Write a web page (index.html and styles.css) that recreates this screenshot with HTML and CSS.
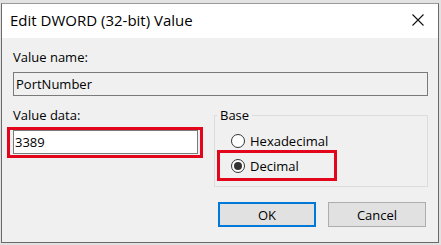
FILE: index.html
```html
<!DOCTYPE html>
<html>
<head>
<meta charset="utf-8">
<link rel="stylesheet" href="styles.css">
</head>
<body>
<div class="window">
  <div class="titlebar">
    <span class="title">Edit DWORD (32-bit) Value</span>
    <svg class="close" width="12" height="12" viewBox="0 0 12 12"><path d="M0.5 0.5L11.5 11.5M11.5 0.5L0.5 11.5" stroke="#111" stroke-width="1.1" fill="none"/></svg>
  </div>
  <div class="content">
    <div class="label">Value name:</div>
    <div class="field readonly">PortNumber</div>
    <div class="row">
      <div class="left">
        <div class="label">Value data:</div>
        <div class="mark data-mark"><div class="field input">3389</div></div>
      </div>
      <fieldset class="group">
        <legend>Base</legend>
        <div class="radio-row hex"><span class="radio"></span><span class="radio-text">Hexadecimal</span></div>
        <div class="mark dec-mark"><div class="radio-row dec"><span class="radio checked"></span><span class="radio-text">Decimal</span></div></div>
      </fieldset>
    </div>
    <div class="buttons">
      <div class="btn default">OK</div>
      <div class="btn">Cancel</div>
    </div>
  </div>
</div>
</body>
</html>
```
FILE: styles.css
```css
html, body {
  margin: 0;
}
body {
  background: #e2e2e2;
  padding: 3px 0 0 1px;
  width: 441px;
  height: 245px;
  box-sizing: border-box;
  overflow: hidden;
  font-family: "Open Sans", "Noto Sans", sans-serif;
  color: #000;
}
.window {
  width: 438px;
  height: 240px;
  box-sizing: border-box;
  border: 1px solid #6a6a6a;
  border-top-color: #9a9a9a;
  background: #f0f0f0;
  display: flex;
  flex-direction: column;
}
.titlebar {
  height: 34px;
  flex: none;
  background: #fff;
  display: flex;
  align-items: center;
  justify-content: space-between;
  padding: 0 14px 3px 8px;
  box-sizing: border-box;
}
.title {
  font-size: 15px;
  line-height: 18px;
}
.close {
  display: block;
}
.content {
  flex: 1;
  padding: 11px 10px 0 11px;
}
.label {
  font-size: 13px;
  line-height: 16px;
}
.field {
  height: 24px;
  box-sizing: border-box;
  border: 1px solid #7a7a7a;
  font-size: 13px;
  line-height: 22px;
}
.readonly {
  margin-top: 7px;
  padding-left: 2px;
}
.row {
  display: flex;
  margin-top: 11px;
  margin-left: -6px;
}
.left {
  width: 196px;
  flex: none;
}
.left .label {
  padding-left: 6px;
}
.mark {
  border: 3px solid #e3051b;
}
.data-mark {
  margin-top: 4px;
  padding: 0 2px 1px 3px;
}
.input {
  background: #fff;
  padding-left: 1px;
}
.group {
  flex: 1;
  min-width: 0;
  margin: 0 0 0 11px;
  padding: 9px 0 5px 2px;
  border: 1px solid #dcdcdc;
}
.group legend {
  padding: 0 3px;
  font-size: 13px;
  line-height: 16px;
}
.radio-row {
  display: flex;
  align-items: center;
  font-size: 13px;
}
.hex {
  height: 18px;
  padding-left: 14px;
}
.dec-mark {
  width: 120px;
  box-sizing: border-box;
}
.dec {
  height: 25px;
  padding-left: 11px;
}
.radio {
  width: 14px;
  height: 14px;
  box-sizing: border-box;
  border: 1px solid #333;
  border-radius: 50%;
  background: #fff;
  display: flex;
  align-items: center;
  justify-content: center;
  flex: none;
}
.radio.checked::after {
  content: "";
  width: 8px;
  height: 8px;
  border-radius: 50%;
  background: #333;
}
.radio-text {
  margin-left: 5px;
}
.buttons {
  display: flex;
  justify-content: flex-end;
  gap: 12px;
  margin-top: 15px;
  margin-right: 2px;
}
.btn {
  width: 98px;
  height: 25px;
  box-sizing: border-box;
  background: #e1e1e1;
  border: 1px solid #adadad;
  font-size: 13px;
  display: flex;
  align-items: center;
  justify-content: center;
}
.btn.default {
  border: 2px solid #0078d7;
}
```
